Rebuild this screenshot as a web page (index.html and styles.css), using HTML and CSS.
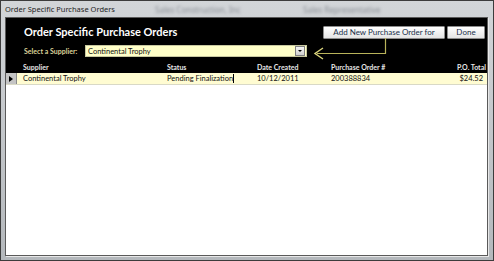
FILE: index.html
```html
<!DOCTYPE html>
<html lang="en">
<head>
    <meta charset="UTF-8">
    <title>Order Specific Purchase Orders</title>
    <link rel="stylesheet" href="styles.css">
</head>
<body>

    <div class="window">
        <!-- Barre de titre -->
        <div class="titlebar">
            <span class="caption">Order Specific Purchase Orders</span>
            <span class="ghost ghost-1">Sales Construction, Inc</span>
            <span class="ghost ghost-2">Sales Representative</span>
        </div>

        <div class="client">
            <div class="header">
                <div class="top-row">
                    <h1 class="form-title">Order Specific Purchase Orders</h1>
                    <div class="actions">
                        <button class="btn btn-add">Add New Purchase Order for</button>
                        <button class="btn btn-done">Done</button>
                    </div>
                </div>

                <div class="supplier-row">
                    <label class="supplier-label">Select a Supplier:</label>
                    <div class="combo">
                        <span class="combo-value">Continental Trophy</span>
                        <span class="combo-btn"><span class="combo-caret"></span></span>
                    </div>
                </div>

                <!-- Flèche entre le bouton et la liste -->
                <svg class="connector" width="80" height="24" viewBox="0 0 80 24">
                    <polyline points="73.5,0 73.5,15.5 5,15.5" fill="none" stroke="#b9b35a" stroke-width="1.2"/>
                    <polyline points="11,10 3,15.5 11,21" fill="none" stroke="#dcd67e" stroke-width="1.4"/>
                </svg>

                <div class="grid-head">
                    <span class="sel"></span>
                    <span class="col c-sup">Supplier</span>
                    <span class="col c-status">Status</span>
                    <span class="col c-date">Date Created</span>
                    <span class="col c-po">Purchase Order #</span>
                    <span class="col c-total">P.O. Total</span>
                </div>
            </div>

            <div class="grid-row">
                <span class="sel current"><span class="pointer"></span></span>
                <span class="col c-sup">Continental Trophy</span>
                <span class="col c-status">Pending Finalization<span class="cursor"></span></span>
                <span class="col c-date">10/12/2011</span>
                <span class="col c-po">200388834</span>
                <span class="col c-total value">$24.52</span>
            </div>

            <div class="empty"></div>
        </div>
    </div>

</body>
</html>
```

FILE: styles.css
```css
body {
    margin: 0;
    padding: 0;
    background-color: #ffffff;
    font-family: 'Lato', 'Noto Sans', sans-serif;
}

.window {
    width: 494px;
    height: 261px;
    box-sizing: border-box;
    display: flex;
    flex-direction: column;
    background: linear-gradient(#d2d5d8, #b4b8bc);
    border: 1px solid #3c3c3c;
    padding: 0 5px 4px 4px;
}

/* Barre de titre */
.titlebar {
    height: 16px;
    display: flex;
    align-items: center;
    position: relative;
    font-family: 'Noto Sans', sans-serif;
    font-size: 7.5px;
    color: #1e1e1e;
}

.ghost {
    position: absolute;
    top: 3px;
    color: #8a8f96;
    filter: blur(1.4px);
    font-size: 8px;
}

.ghost-1 { left: 150px; }
.ghost-2 { left: 298px; }

.client {
    flex: 1;
    display: flex;
    flex-direction: column;
    background-color: #ffffff;
    border: 1px solid #5a5a5a;
    box-shadow: 1px 1px 0 #e8e8e8;
}

.header {
    background-color: #000000;
    position: relative;
    padding-top: 6px;
}

.top-row {
    display: flex;
    justify-content: space-between;
    align-items: flex-start;
    padding: 0 2px 0 18px;
}

.form-title {
    margin: 0;
    font-size: 11px;
    font-weight: bold;
    color: #ffffff;
    line-height: 14px;
    padding-top: 1px;
}

.actions {
    display: flex;
    gap: 2px;
    padding-top: 2px;
}

.btn {
    height: 13px;
    padding: 0;
    border: 1px solid #8c8c8c;
    border-radius: 1px;
    background: linear-gradient(#ffffff, #e4e4e4);
    color: #20304a;
    font-family: 'Lato', sans-serif;
    font-size: 8px;
    line-height: 11px;
}

.btn-add { width: 122px; }
.btn-done { width: 38px; }

.supplier-row {
    display: flex;
    align-items: center;
    gap: 4px;
    padding: 6px 0 0 18px;
}

.supplier-label {
    font-size: 7px;
    font-weight: bold;
    color: #ddd49a;
    width: 57px;
    white-space: nowrap;
}

.combo {
    width: 220px;
    height: 10px;
    display: flex;
    align-items: center;
    justify-content: space-between;
    background-color: #ffffc8;
    border: 1px solid #c8c8a0;
}

.combo-value {
    font-size: 7.5px;
    color: #111111;
    padding-left: 2px;
}

.combo-btn {
    width: 8px;
    height: 8px;
    margin-right: 1px;
    background: linear-gradient(#f6f6f6, #d0d0d0);
    border: 1px solid #808080;
    display: flex;
    align-items: center;
    justify-content: center;
}

.combo-caret {
    border-left: 2px solid transparent;
    border-right: 2px solid transparent;
    border-top: 2px solid #000000;
}

.connector {
    position: absolute;
    left: 306px;
    top: 20px;
}

.grid-head {
    display: flex;
    align-items: center;
    height: 13px;
    margin-top: 3px;
    font-size: 7px;
    font-weight: bold;
    color: #e6e6e6;
}

.grid-row {
    display: flex;
    align-items: center;
    height: 11px;
    background-color: #fffcd2;
    border-bottom: 1px solid #d9d9c6;
    font-size: 7.5px;
    color: #111111;
}

.sel {
    width: 11px;
    height: 100%;
    flex-shrink: 0;
}

.sel.current {
    background-color: #c4c4c4;
    border-right: 1px solid #8a8a8a;
    box-sizing: border-box;
    display: flex;
    align-items: center;
    justify-content: center;
}

.pointer {
    border-top: 3.5px solid transparent;
    border-bottom: 3.5px solid transparent;
    border-left: 4px solid #000000;
}

.col {
    white-space: nowrap;
}

.c-sup { width: 144px; padding-left: 6px; }
.c-status { width: 90px; }
.c-date { width: 74px; }
.c-po { width: 100px; }
.c-total { width: 55px; text-align: right; }
.c-total.value { width: 52px; padding-right: 3px; }

.cursor {
    display: inline-block;
    width: 1px;
    height: 9px;
    background-color: #000000;
    vertical-align: -2px;
}

.empty {
    flex: 1;
}
```
